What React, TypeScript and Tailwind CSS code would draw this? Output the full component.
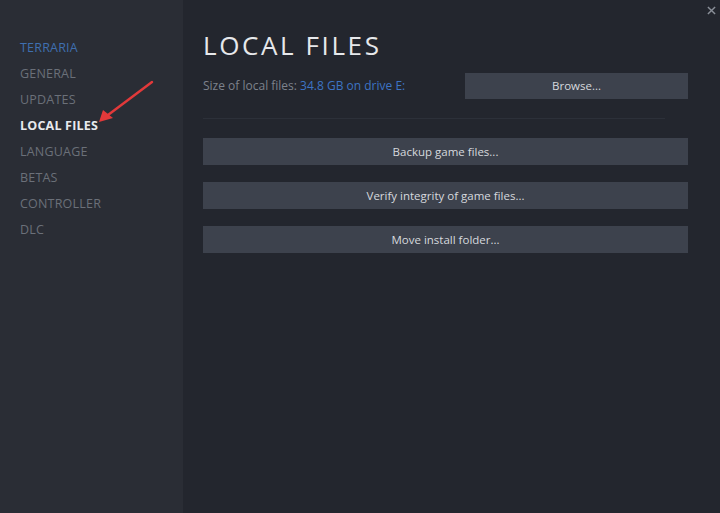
import React from "react";

const NAV_ITEMS = [
  "TERRARIA",
  "GENERAL",
  "UPDATES",
  "LOCAL FILES",
  "LANGUAGE",
  "BETAS",
  "CONTROLLER",
  "DLC",
];

const ACTIONS = ["Backup game files...", "Verify integrity of game files...", "Move install folder..."];

export default function App() {
  return (
    <div
      className="relative flex h-[513px] w-[720px] overflow-hidden bg-[#23262e]"
      style={{ fontFamily: '"Open Sans", "Liberation Sans", sans-serif' }}
    >
      {/* Sidebar */}
      <div className="flex w-[183px] shrink-0 flex-col bg-[#2a2d35] pl-[20px] pt-[39px]">
        {NAV_ITEMS.map((item, i) => (
          <div
            key={item}
            className={`h-[26px] text-[12.5px] leading-[18px] tracking-[0.2px] ${
              i === 0
                ? "text-[#3f6fb0]"
                : item === "LOCAL FILES"
                ? "font-bold text-[#e8eaee]"
                : "text-[#6b7079]"
            }`}
          >
            {item}
          </div>
        ))}
      </div>

      {/* Main panel */}
      <div className="flex flex-1 flex-col pl-[20px] pr-[32px] pt-[28px]">
        <h1 className="text-[26px] leading-[34px] tracking-[2.6px] text-[#e6e8eb]">LOCAL FILES</h1>

        <div className="mt-[11px] flex items-center justify-between">
          <p className="text-[12px] text-[#7d828c]">
            Size of local files: <span className="text-[#3d74c4]">34.8 GB on drive E:</span>
          </p>
          <button className="h-[26px] w-[223px] bg-[#3d424d] text-[11.5px] text-[#d6d9de]">Browse...</button>
        </div>

        <div className="mt-[19px] mr-[23px] h-px bg-[#2c3039]" />

        <div className="mt-[19px] flex flex-col gap-[17px]">
          {ACTIONS.map((label) => (
            <button key={label} className="h-[27px] w-full bg-[#3d424d] text-[11.5px] text-[#d6d9de]">
              {label}
            </button>
          ))}
        </div>
      </div>

      {/* Close button */}
      <button className="absolute right-[2px] top-[3px] flex h-[14px] w-[14px] items-center justify-center text-[#8a8f98]">
        <svg width="9" height="9" viewBox="0 0 10 10">
          <path d="M1 1 L9 9 M9 1 L1 9" stroke="currentColor" strokeWidth="1.6" />
        </svg>
      </button>

      {/* Annotation arrow */}
      <svg className="pointer-events-none absolute left-0 top-0" width="720" height="513">
        <line x1="152" y1="82" x2="108" y2="115" stroke="#e2393a" strokeWidth="2.4" strokeLinecap="round" />
        <polygon points="99,122 103,110 113,118" fill="#e2393a" />
      </svg>
    </div>
  );
}
